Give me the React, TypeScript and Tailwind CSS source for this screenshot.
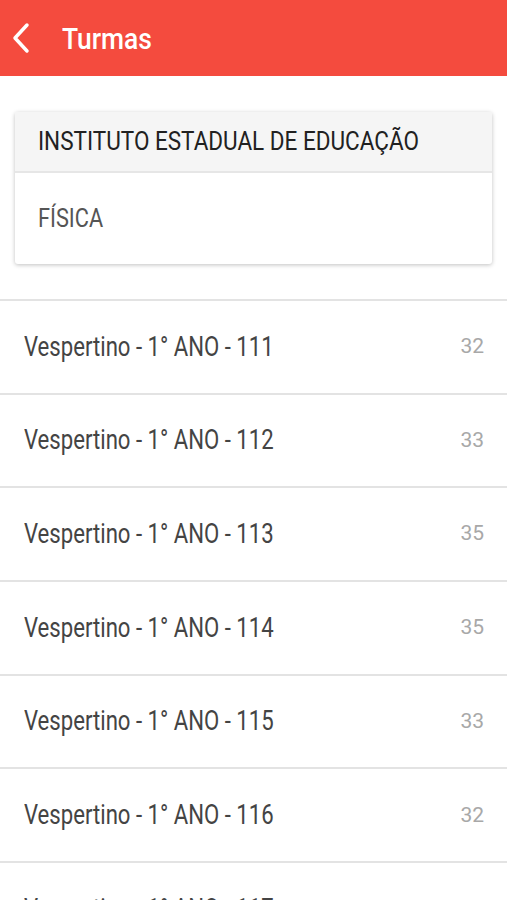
const turmas = [
  { nome: "Vespertino - 1° ANO - 111", alunos: 32 },
  { nome: "Vespertino - 1° ANO - 112", alunos: 33 },
  { nome: "Vespertino - 1° ANO - 113", alunos: 35 },
  { nome: "Vespertino - 1° ANO - 114", alunos: 35 },
  { nome: "Vespertino - 1° ANO - 115", alunos: 33 },
  { nome: "Vespertino - 1° ANO - 116", alunos: 32 },
  { nome: "Vespertino - 1° ANO - 117", alunos: 33 },
];

const App = () => {
  return (
    <div className="w-[507px] h-[900px] overflow-hidden bg-white font-['Roboto',sans-serif]">
      <header className="h-[76px] bg-[#f44b3e] text-white flex items-center">
        <button className="w-[50px] h-full flex items-center pl-[11px]">
          <svg width="20" height="32" viewBox="0 0 20 32" fill="none">
            <path d="M16 3 L4 16 L16 29" stroke="white" strokeWidth="3.5" strokeLinecap="round" strokeLinejoin="round" />
          </svg>
        </button>
        <span className="ml-[12px] inline-block origin-left scale-x-[0.88] text-[30px] font-medium whitespace-nowrap">
          Turmas
        </span>
      </header>

      <div className="mx-[15px] mt-[36px] rounded-[3px] bg-white shadow-[0_1px_4px_rgba(0,0,0,0.25)]">
        <div className="h-[61px] bg-[#f5f5f5] border-b-2 border-[#e6e6e6] flex items-center px-[23px]">
          <span className="inline-block origin-left scale-x-[0.9] text-[25px] text-[#212121] whitespace-nowrap">
            INSTITUTO ESTADUAL DE EDUCAÇÃO
          </span>
        </div>
        <div className="h-[91px] flex items-center px-[23px]">
          <span className="inline-block origin-left scale-x-[0.87] text-[25px] text-[#555]">FÍSICA</span>
        </div>
      </div>

      <ul className="mt-[35px] border-t-2 border-[#e3e3e3]">
        {turmas.map((t) => (
          <li
            key={t.nome}
            className="h-[93.7px] border-b-2 border-[#e3e3e3] flex items-center justify-between pl-[24px] pr-[23px]"
          >
            <span className="inline-block origin-left scale-x-[0.82] text-[27px] text-[#444] whitespace-nowrap">
              {t.nome}
            </span>
            <span className="text-[21px] text-[#a8a8a8]">{t.alunos}</span>
          </li>
        ))}
      </ul>
    </div>
  );
};

export default App;
